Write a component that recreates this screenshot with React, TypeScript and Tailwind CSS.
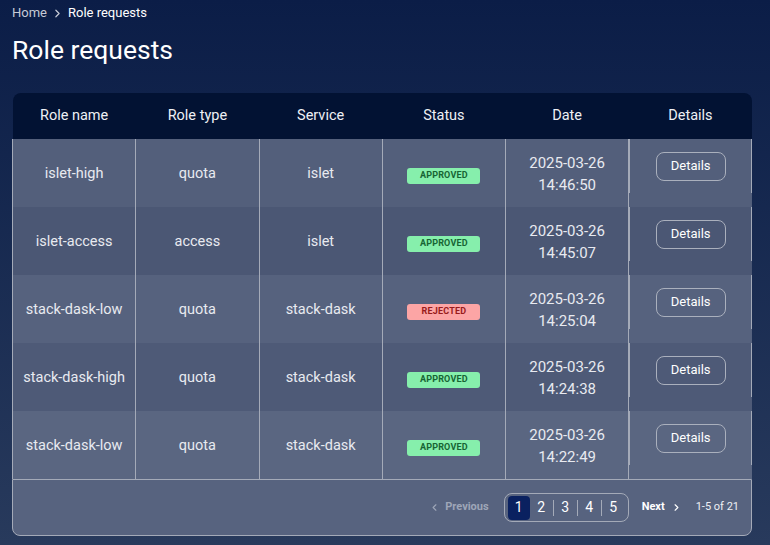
import { ChevronLeft, ChevronRight } from "lucide-react";

type Row = { name: string; type: string; service: string; status: "approved" | "rejected"; date: string; time: string };

const rows: Row[] = [
  { name: "islet-high", type: "quota", service: "islet", status: "approved", date: "2025-03-26", time: "14:46:50" },
  { name: "islet-access", type: "access", service: "islet", status: "approved", date: "2025-03-26", time: "14:45:07" },
  { name: "stack-dask-low", type: "quota", service: "stack-dask", status: "rejected", date: "2025-03-26", time: "14:25:04" },
  { name: "stack-dask-high", type: "quota", service: "stack-dask", status: "approved", date: "2025-03-26", time: "14:24:38" },
  { name: "stack-dask-low", type: "quota", service: "stack-dask", status: "approved", date: "2025-03-26", time: "14:22:49" },
];

const rowBg = ["bg-[#535f7b]", "bg-[#4b5774]", "bg-[#56627e]", "bg-[#4e5a77]", "bg-[#5a6681]"];

const headers = ["Role name", "Role type", "Service", "Status", "Date", "Details"];

function Badge({ status }: { status: Row["status"] }) {
  const cls =
    status === "approved" ? "bg-[#86efac] text-[#166534]" : "bg-[#fca5a5] text-[#991b1b]";
  return (
    <span className={`inline-flex items-center justify-center w-[73px] h-4 rounded-[3px] text-[9px] font-bold uppercase tracking-[0.02em] ${cls}`}>
      {status}
    </span>
  );
}

export default function App() {
  return (
    <div
      className="min-h-screen w-full bg-gradient-to-b from-[#0b1d47] to-[#283a5c] text-[#e8eaf0] px-3 pt-[5px]"
      style={{ fontFamily: "Roboto, 'Noto Sans', sans-serif" }}
    >
      <nav className="flex items-center gap-1 text-[13px] h-4">
        <span className="text-[#c6cad6]">Home</span>
        <ChevronRight size={13} strokeWidth={2.2} className="text-[#c6cad6]" />
        <span className="text-white">Role requests</span>
      </nav>
      <h1 className="text-[26.5px] leading-[30px] mt-[14px] text-white">Role requests</h1>

      <div className="mt-[28px] w-[740px]">
        <table className="w-full table-fixed border-collapse text-[14.5px]">
          <thead>
            <tr className="bg-[#021233] h-[46px]">
              {headers.map((h, i) => (
                <th
                  key={h}
                  className={`font-normal text-[#eef0f5] ${i === 0 ? "rounded-tl-lg" : ""} ${i === headers.length - 1 ? "rounded-tr-lg" : ""}`}
                >
                  {h}
                </th>
              ))}
            </tr>
          </thead>
          <tbody>
            {rows.map((r, i) => (
              <tr key={i} className={`h-[68px] ${rowBg[i]}`}>
                <td className="text-center border-l border-[#a4aab8] p-0 pt-[2px]">{r.name}</td>
                <td className="text-center border-l border-[#a4aab8] p-0 pt-[2px]">{r.type}</td>
                <td className="text-center border-l border-[#a4aab8] p-0 pt-[2px]">{r.service}</td>
                <td className="text-center border-l border-[#a4aab8] p-0 pt-[2px]">
                  <Badge status={r.status} />
                </td>
                <td className="text-center border-l border-[#a4aab8] p-0 pt-[2px] text-[15px] leading-[22px]">
                  <div>{r.date}</div>
                  <div>{r.time}</div>
                </td>
                <td className="border-l border-[#a4aab8] p-0 align-top">
                  <div className="h-[54px] flex items-center justify-center border-l border-r border-[#a4aab8]">
                    <button className="w-[70px] h-[29px] rounded-lg border border-[#aab0bd] text-[13px] text-white">
                      Details
                    </button>
                  </div>
                </td>
              </tr>
            ))}
          </tbody>
        </table>
        <div className="h-[57px] bg-[#57637f] border border-[#a4aab8] rounded-b-lg flex items-center justify-end pr-3 text-[11px]">
          <button className="flex items-center gap-[5px] font-bold text-[#9ea6b8] mr-[15px]">
            <ChevronLeft size={11} strokeWidth={2.5} />
            Previous
          </button>
          <div className="flex items-center h-[29px] px-[3px] rounded-lg border border-[#a4aab8] text-[14px]">
            <span className="w-[22px] h-[24px] rounded-[4px] bg-[#0a2160] flex items-center justify-center text-white">1</span>
            {[2, 3, 4, 5].map((n, k) => (
              <span key={n} className="flex items-center">
                {k > 0 && <span className="w-px h-4 bg-[#a4aab8]" />}
                <span className="w-[23px] flex items-center justify-center text-white">{n}</span>
              </span>
            ))}
          </div>
          <button className="flex items-center gap-[6px] font-bold text-white ml-[13px]">
            Next
            <ChevronRight size={11} strokeWidth={2.5} />
          </button>
          <span className="ml-[14px] text-[#eef0f5]">1-5 of 21</span>
        </div>
      </div>
    </div>
  );
}
